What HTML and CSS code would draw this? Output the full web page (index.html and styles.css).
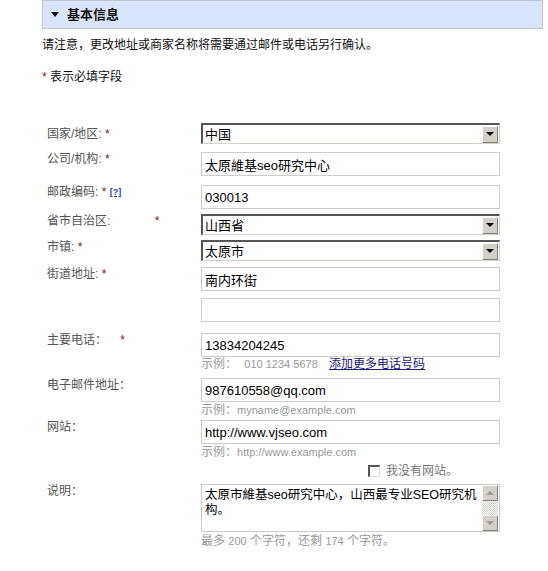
FILE: index.html
```html
<!DOCTYPE html>
<html lang="zh-CN">
<head>
  <meta charset="UTF-8">
  <title>基本信息</title>
  <link rel="stylesheet" href="styles.css">
</head>
<body>

  <div class="page">
    <div class="section-head"><span class="tri"></span>基本信息</div>

    <p class="note note-first">请注意，更改地址或商家名称将需要通过邮件或电话另行确认。</p>
    <p class="note"><span class="req">*</span> 表示必填字段</p>

    <div class="form">
      <div class="row row-country">
        <label class="lbl lbl-country">国家/地区: <span class="req">*</span></label>
        <div class="field">
          <div class="select"><span class="select-text">中国</span><span class="arrow"></span></div>
        </div>
      </div>

      <div class="row gap-8">
        <label class="lbl">公司/机构: <span class="req">*</span></label>
        <div class="field"><input type="text" class="text" value="太原維基seo研究中心"></div>
      </div>

      <div class="row gap-9">
        <label class="lbl">邮政编码: <span class="req">*</span> <a href="#" class="help">[?]</a></label>
        <div class="field"><input type="text" class="text" value="030013"></div>
      </div>

      <div class="row gap-5">
        <label class="lbl">省市自治区: <span class="req req-far">*</span></label>
        <div class="field">
          <div class="select"><span class="select-text">山西省</span><span class="arrow"></span></div>
        </div>
      </div>

      <div class="row gap-5">
        <label class="lbl">市镇: <span class="req">*</span></label>
        <div class="field">
          <div class="select"><span class="select-text">太原市</span><span class="arrow"></span></div>
        </div>
      </div>

      <div class="row gap-6">
        <label class="lbl">街道地址: <span class="req">*</span></label>
        <div class="field field-stack">
          <input type="text" class="text" value="南内环街">
          <input type="text" class="text" value="">
        </div>
      </div>

      <div class="row gap-11">
        <label class="lbl">主要电话： <span class="req req-mid">*</span></label>
        <div class="field">
          <input type="text" class="text" value="13834204245">
          <div class="hint hint-phone">示例： <span class="sample sample-gap">010 1234 5678</span> <a href="#" class="more">添加更多电话号码</a></div>
        </div>
      </div>

      <div class="row gap-6">
        <label class="lbl">电子邮件地址：</label>
        <div class="field">
          <input type="text" class="text" value="987610558@qq.com">
          <div class="hint">示例：<span class="sample">myname@example.com</span></div>
        </div>
      </div>

      <div class="row gap-2">
        <label class="lbl">网站：</label>
        <div class="field">
          <input type="text" class="text" value="http://www.vjseo.com">
          <div class="hint">示例：<span class="sample">http://www.example.com</span></div>
          <div class="nosite"><span class="check"></span>我没有网站。</div>
        </div>
      </div>

      <div class="row gap-5">
        <label class="lbl">说明：</label>
        <div class="field">
          <div class="textarea">
            <div class="textarea-text">太原市維基seo研究中心，山西最专业SEO研究机构。</div>
            <div class="scrollbar">
              <span class="sb-btn"><span class="up"></span></span>
              <span class="sb-track"></span>
              <span class="sb-btn"><span class="down"></span></span>
            </div>
          </div>
          <div class="hint hint-count">最多 <span class="sample">200</span> 个字符，还剩 <span class="sample">174</span> 个字符。</div>
        </div>
      </div>
    </div>
  </div>

</body>
</html>
```

FILE: styles.css
```css
body {
  margin: 0;
  background: #fff;
  font-family: "Liberation Sans", Arial, "Noto Sans CJK SC", sans-serif;
  font-size: 12px;
  color: #000;
}

.page {
  padding-left: 42px;
  width: 501px;
}

.section-head {
  height: 27px;
  line-height: 27px;
  background: #d9e5fb;
  border: 1px solid #c2c6cc;
  font-size: 13px;
  font-weight: bold;
  color: #111;
  display: flex;
  align-items: center;
}

.tri {
  width: 0;
  height: 0;
  border-left: 4px solid transparent;
  border-right: 4px solid transparent;
  border-top: 5px solid #111;
  margin: 0 8px 0 8px;
}

.note {
  margin: 0;
  line-height: 16px;
  color: #111;
}

.note-first {
  margin-top: 8px;
  margin-bottom: 16px;
}

.req {
  color: #7a1c1c;
}

.req-far {
  margin-left: 41px;
}

.req-mid {
  margin-left: 10px;
}

.form {
  margin-top: 38px;
  padding-left: 5px;
}

.row {
  display: flex;
  align-items: flex-start;
}

.gap-2 { margin-top: 2px; }
.gap-5 { margin-top: 5px; }
.gap-6 { margin-top: 6px; }
.gap-8 { margin-top: 8px; }
.gap-9 { margin-top: 9px; }
.gap-11 { margin-top: 11px; }

.lbl {
  width: 154px;
  flex-shrink: 0;
  line-height: 14px;
  color: #555;
}

.lbl-country {
  padding-top: 4px;
}

.help {
  color: #1c3fa8;
  font-size: 9px;
  font-weight: bold;
  vertical-align: 1px;
}

.field {
  width: 299px;
  display: flex;
  flex-direction: column;
}

.field-stack {
  gap: 7px;
}

.text {
  box-sizing: border-box;
  width: 299px;
  height: 24px;
  margin: 0;
  padding: 0 3px;
  border: 1px solid #ccc;
  font-family: "Liberation Sans", Arial, "Noto Sans CJK SC", sans-serif;
  font-size: 13px;
  color: #000;
  outline: none;
}

.select {
  box-sizing: border-box;
  width: 299px;
  height: 21px;
  border-top: 2px solid #555;
  border-left: 2px solid #555;
  border-bottom: 1px solid #d4d0c8;
  border-right: 1px solid #d4d0c8;
  display: flex;
  align-items: center;
  justify-content: space-between;
  background: #fff;
}

.select-text {
  font-size: 13px;
  padding-left: 2px;
  line-height: 17px;
}

.arrow {
  box-sizing: border-box;
  width: 16px;
  height: 17px;
  margin-right: 1px;
  background: #d4d0c8;
  border-top: 1px solid #fff;
  border-left: 1px solid #fff;
  border-bottom: 1px solid #808080;
  border-right: 1px solid #808080;
  display: flex;
  align-items: center;
  justify-content: center;
}

.arrow::after {
  content: "";
  border-left: 4px solid transparent;
  border-right: 4px solid transparent;
  border-top: 4px solid #000;
}

.hint {
  color: #999;
  font-size: 12px;
  line-height: 15px;
  margin-top: 1px;
}

.hint-phone {
  margin-top: 0;
}

.sample {
  font-size: 11px;
}

.sample-gap {
  margin-left: 4px;
  margin-right: 8px;
}

.more {
  color: #1a1a80;
}

.nosite {
  display: flex;
  align-items: center;
  margin-top: 3px;
  margin-left: 167px;
  color: #777;
  line-height: 16px;
}

.check {
  box-sizing: border-box;
  width: 12px;
  height: 12px;
  margin-right: 6px;
  border-top: 2px solid #555;
  border-left: 2px solid #555;
  border-bottom: 1px solid #ddd;
  border-right: 1px solid #ddd;
  background: #fff;
}

.textarea {
  box-sizing: border-box;
  width: 299px;
  height: 48px;
  border: 1px solid #ccc;
  display: flex;
  justify-content: space-between;
}

.textarea-text {
  flex: 1;
  padding: 3px 4px 0 3px;
  font-size: 12.5px;
  line-height: 15px;
}

.scrollbar {
  width: 16px;
  display: flex;
  flex-direction: column;
  margin-right: 1px;
}

.sb-btn {
  box-sizing: border-box;
  height: 16px;
  background: #d4d0c8;
  border-top: 1px solid #fff;
  border-left: 1px solid #fff;
  border-bottom: 1px solid #808080;
  border-right: 1px solid #808080;
  display: flex;
  align-items: center;
  justify-content: center;
}

.sb-track {
  flex: 1;
  background: repeating-conic-gradient(#d4d0c8 0 25%, #fff 0 50%) 0 0 / 2px 2px;
}

.up {
  border-left: 4px solid transparent;
  border-right: 4px solid transparent;
  border-bottom: 4px solid #9a9a9a;
}

.down {
  border-left: 4px solid transparent;
  border-right: 4px solid transparent;
  border-top: 4px solid #9a9a9a;
}

.hint-count {
  margin-top: 2px;
}
```
